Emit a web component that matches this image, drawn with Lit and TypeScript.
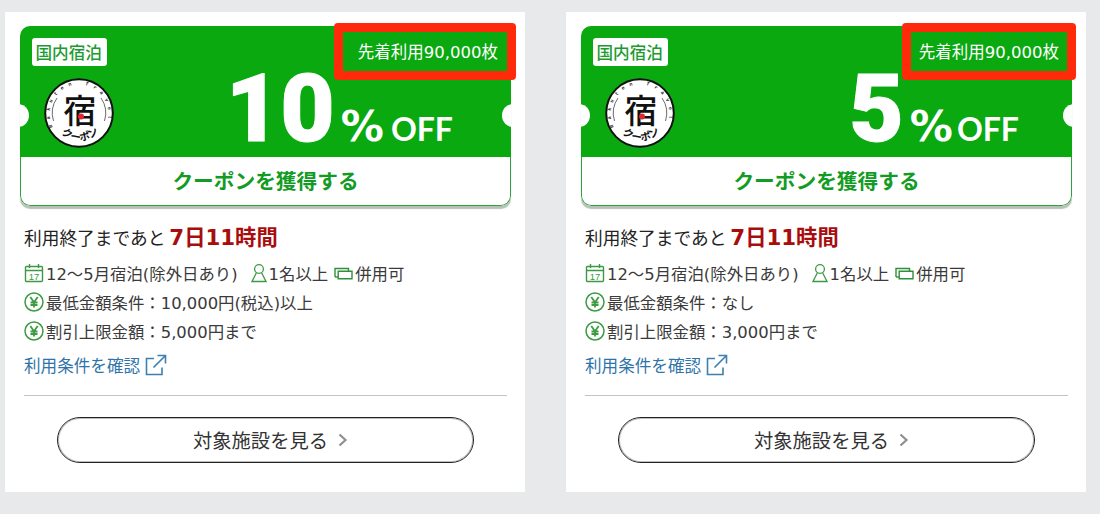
import { LitElement, html, css, unsafeCSS } from "lit";
import { customElement } from "lit/decorators.js";

const JP = `"DejaVu Sans", "Noto Sans CJK JP", sans-serif`;
const JPONLY = `"Noto Sans CJK JP", sans-serif`;

const calIcon = html`<svg class="ic" width="20" height="20" viewBox="0 0 20 20" fill="none" stroke="#3d9a42" stroke-width="1.4"><rect x="1.5" y="3.5" width="17" height="15" rx="1"/><path d="M1.5 7.5h17M5.5 1v4M14.5 1v4" /><text x="10" y="16.6" font-size="9.5" font-family="Liberation Sans" text-anchor="middle" fill="#3d9a42" stroke="none">17</text></svg>`;
const yenIcon = html`<svg class="ic" width="20" height="20" viewBox="0 0 20 20" fill="none" stroke="#3d9a42"><circle cx="10" cy="10" r="9" stroke-width="1.5"/><path d="M6.3 5 10 10.2 13.7 5M10 10.2V15.5M6.5 10.5h7M6.5 13h7" stroke-width="1.8"/></svg>`;
const personIcon = html`<svg class="ic" width="16" height="20" viewBox="0 0 16 20" fill="none" stroke="#3d9a42" stroke-width="1.3"><circle cx="8" cy="6" r="4.4"/><path d="M5.3 10 1 18.5h14L10.7 10"/></svg>`;
const ticketIcon = html`<svg class="ic" width="19" height="14" viewBox="0 0 19 14" fill="none" stroke="#2f8f3a" stroke-width="1.4"><path d="M1 11V2.5h13.5V5"/><path d="M4.2 5.2H18v7.6H4.2z"/><path d="M1 11h3"/></svg>`;
const extIcon = html`<svg width="22" height="22" viewBox="0 0 22 22" fill="none" stroke="#3d7fb0" stroke-width="1.6"><path d="M9 4.5H1.5v16H17v-7"/><path d="M8.5 13.5 20.5 1.5M12.5 1.5h8v8"/></svg>`;
const chevron = html`<svg width="10" height="14" viewBox="0 0 10 14" fill="none" stroke="#8f8f8f" stroke-width="2.2"><path d="M1.5 1.5 7.5 7l-6 5.5"/></svg>`;

const logo = html`<svg class="logo" width="70" height="70" viewBox="0 0 70 70">
  <circle cx="35" cy="35" r="33.8" fill="#fff" stroke="#111" stroke-width="2"/>
  <path d="M9.5 43A26.5 26.5 0 0 1 13 20M57 20A26.5 26.5 0 0 1 60.5 43" fill="none" stroke="#444" stroke-width=".8"/>
  <defs>
    <path id="ring" d="M9 49A29.2 29.2 0 1 1 61 49"/>
    <path id="low" d="M12 49A27 27 0 0 0 59 49"/>
  </defs>
  <text font-size="5" font-family="Liberation Mono" font-weight="700" fill="#222" letter-spacing="5.2"><textPath href="#ring">Rakuten Travel</textPath></text>
  <text x="36" y="45" font-size="33" font-family=${JPONLY} font-weight="500" text-anchor="middle" fill="#111">宿</text>
  <circle cx="37" cy="38.5" r="3" fill="#e3262e"/>
  <text font-size="10.5" font-family=${JPONLY} font-weight="700" fill="#111"><textPath href="#low" startOffset="8">クーポン</textPath></text>
</svg>`;

const coupons = [
  { pct: "10", note: "10,000円(税込)以上", limit: "5,000円まで", cls: "" },
  { pct: "5", note: "なし", limit: "3,000円まで", cls: "five" },
];

@customElement("app-root")
export class AppRoot extends LitElement {
  static styles = css`
    :host {
      display: block;
      width: 1100px;
      height: 514px;
      background: #e8e9ea;
      overflow: hidden;
      font-family: ${unsafeCSS(JP)};
    }
    .page {
      display: flex;
      gap: 41px;
      padding: 12px 5px 0;
    }
    .card {
      position: relative;
      width: 520px;
      height: 480px;
      background: #fff;
      box-sizing: border-box;
      padding: 14px 14px 0 15px;
      flex: none;
    }
    .coupon {
      position: relative;
      height: 180px;
      border-radius: 10px;
      overflow: hidden;
    }
    .wrap { border-radius: 10px; box-shadow: 0 3px 1px #b7c2b7; }
    .top {
      background: #09a90f;
      height: 131px;
      box-sizing: border-box;
      padding: 12px 12px 0 12px;
      display: grid;
      grid-template-columns: 1fr auto;
      position: relative;
    }
    .left { display: flex; flex-direction: column; align-items: flex-start; }
    .tag {
      background: #fff;
      color: #1b9b30;
      font-size: 16.6px;
      font-weight: 500;
      line-height: 28px;
      padding: 0 3.5px;
      border-radius: 3px;
      width: 75px;
      box-sizing: border-box;
      white-space: nowrap;
      font-family: ${unsafeCSS(JPONLY)};
    }
    .logo { margin: 12px 0 0 12px; }
    .right { display: flex; flex-direction: column; align-items: flex-end; }
    .remain {
      color: #fff;
      font-size: 16.5px;
      line-height: 30px;
      margin: 0 1px 0 0;
      white-space: nowrap;
    }
    .off {
      display: flex;
      align-items: baseline;
      color: #fff;
      margin: 0 46px 0 0;
      line-height: 82px;
    }
    .five .off { margin-right: 41px; }
    .num {
      font-family: Roboto, sans-serif;
      font-size: 94px;
      font-weight: 900;
      margin-right: 6px;
      -webkit-text-stroke: 1px #fff;
    }
    .pc { font-family: "DejaVu Sans", sans-serif; font-size: 43px; font-weight: 700; margin-right: 7px; }
    .five .pc { margin-right: 4px; }
    .of { font-family: Lato, sans-serif; font-size: 32px; font-weight: 700; }
    .get {
      height: 49px;
      box-sizing: border-box;
      border: 1px solid #33a03f;
      border-top: 0;
      border-radius: 0 0 10px 10px;
      background: #fff;
      color: #129c24;
      font-size: 20.7px;
      font-weight: 700;
      display: flex;
      align-items: center;
      justify-content: center;
      padding-bottom: 3px;
    }
    .notch {
      position: absolute;
      top: 78px;
      width: 22px;
      height: 23px;
      border-radius: 50%;
      background: #fff;
    }
    .notch.l { left: -13px; }
    .notch.r { right: -13px; }
    .flag {
      position: absolute;
      top: 11px;
      right: 9px;
      width: 182px;
      height: 57px;
      box-sizing: border-box;
      border: 9px solid #ff2a0a;
      border-radius: 4px;
    }
    .five .flag { width: 174px; right: 10px; }
    .body { padding: 0 4px 0 4px; color: #333; }
    .deadline {
      margin-top: 18px;
      font-size: 17.7px;
      line-height: 28px;
      color: #222;
      display: flex;
      align-items: baseline;
      white-space: nowrap;
    }
    .deadline b { font-size: 21.3px; color: #a80d0d; font-weight: 700; margin-left: 4px; }
    .rows { margin-top: 5px; display: flex; flex-direction: column; }
    .row {
      display: flex;
      align-items: center;
      height: 29px;
      font-size: 16.4px;
      color: #3a3a3a;
      white-space: nowrap;
    }
    .ic { flex: none; margin-right: 2px; }
    .gap-a { width: 13px; flex: none; }
    .gap-b { width: 6px; flex: none; }
    .link {
      display: flex;
      align-items: center;
      gap: 5px;
      margin-top: 5px;
      height: 30px;
      color: #2f74a8;
      font-size: 16.6px;
    }
    .rule { height: 1px; background: #c4c4c4; margin-top: 15px; }
    .btn {
      display: flex;
      align-items: center;
      justify-content: center;
      gap: 10px;
      margin: 21px 0 0 33px;
      width: 417px;
      height: 46px;
      box-sizing: border-box;
      border: 1px solid #222;
      box-shadow: inset 0 0 0 1px rgba(0, 0, 0, 0.25);
      border-radius: 23px;
      font-size: 19.3px;
      color: #333;
      padding-left: 10px;
    }
  `;

  render() {
    return html`<div class="page">
      ${coupons.map(
        (c) => html`<section class="card ${c.cls}">
          <div class="wrap"><div class="coupon">
            <div class="top">
              <div class="left"><span class="tag">国内宿泊</span>${logo}</div>
              <div class="right">
                <span class="remain">先着利用90,000枚</span>
                <div class="off">
                  <span class="num">${c.pct}</span><span class="pc">%</span><span class="of">OFF</span>
                </div>
              </div>
              <i class="notch l"></i><i class="notch r"></i>
            </div>
            <div class="get">クーポンを獲得する</div>
          </div></div>
          <div class="flag"></div>
          <div class="body">
            <div class="deadline">利用終了まであと<b>7日11時間</b></div>
            <div class="rows">
              <div class="row">${calIcon}<span>12〜5月宿泊(除外日あり)</span><span class="gap-a"></span>${personIcon}<span>1名以上</span><span class="gap-b"></span>${ticketIcon}<span>併用可</span></div>
              <div class="row">${yenIcon}<span>最低金額条件：${c.note}</span></div>
              <div class="row">${yenIcon}<span>割引上限金額：${c.limit}</span></div>
            </div>
            <div class="link"><span>利用条件を確認</span>${extIcon}</div>
            <div class="rule"></div>
            <div class="btn"><span>対象施設を見る</span>${chevron}</div>
          </div>
        </section>`
      )}
    </div>`;
  }
}
